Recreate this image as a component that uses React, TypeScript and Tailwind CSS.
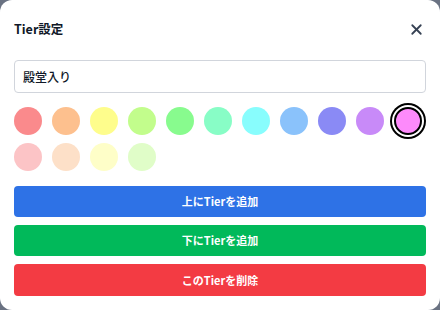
import React, { useState } from 'react';
import { X } from 'lucide-react';

const colors = [
  '#fa8a8c',
  '#fdc08e',
  '#fefd8c',
  '#c2fd8c',
  '#88fb8e',
  '#88fdc6',
  '#88fdfd',
  '#8ac2fb',
  '#8a8af5',
  '#c88af8',
  '#fd8afb',
  '#fcc4c6',
  '#fde0c8',
  '#fefec8',
  '#e0fdc8',
];

export default function App() {
  const [name, setName] = useState('殿堂入り');
  const [selected, setSelected] = useState('#fd8afb');

  return (
    <div
      className="w-[440px] h-[310px] bg-gray-500"
      style={{ fontFamily: '"Noto Sans CJK JP", "Noto Sans", sans-serif' }}
    >
      <div className="w-full h-full bg-white rounded-xl px-[14px] pt-[19px] pb-[14px] flex flex-col">
        <div className="flex justify-between items-center h-[22px]">
          <h3 className="text-[12.5px] font-bold text-gray-900">Tier設定</h3>
          <button className="text-gray-700 mr-[1px]">
            <X size={17} strokeWidth={2.5} />
          </button>
        </div>

        <input
          className="mt-[20px] h-[34px] w-full border border-gray-300 rounded px-[8px] text-[12px] font-medium text-gray-900 outline-none"
          value={name}
          onChange={(e) => setName(e.target.value)}
        />

        <div className="mt-[14px] flex flex-wrap gap-x-[10px] gap-y-[8px]">
          {colors.map((c) => (
            <button
              key={c}
              onClick={() => setSelected(c)}
              className={`w-[28px] h-[28px] rounded-full ${
                selected === c ? 'border-2 border-black shadow-[0_0_0_2px_white,0_0_0_4px_black]' : ''
              }`}
              style={{ backgroundColor: c }}
            />
          ))}
        </div>

        <div className="mt-[15px] flex flex-col gap-[8px]">
          <button className="h-[31px] rounded bg-[#2e72e6] text-white text-[11px] font-bold">
            上にTierを追加
          </button>
          <button className="h-[31px] rounded bg-[#01b95a] text-white text-[11px] font-bold">
            下にTierを追加
          </button>
          <button className="h-[32px] rounded bg-[#f33b43] text-white text-[11px] font-bold">
            このTierを削除
          </button>
        </div>
      </div>
    </div>
  );
}
